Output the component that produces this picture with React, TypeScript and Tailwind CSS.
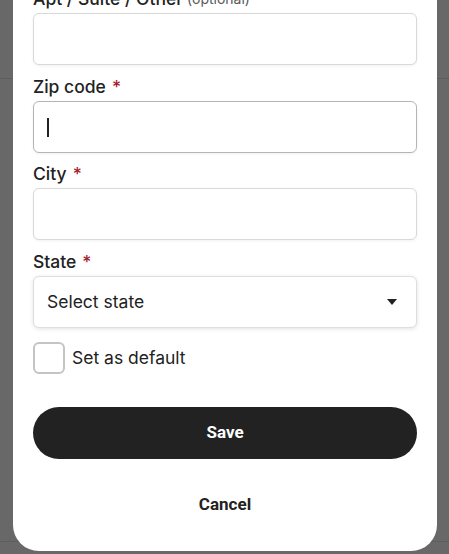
import React from "react";

function Label({ text, optional, required }: { text: string; optional?: boolean; required?: boolean }) {
  return (
    <div className="h-6 mb-[2px] flex items-end text-[17.5px] leading-6 font-medium text-[#222222] whitespace-nowrap">
      <span>{text}</span>
      {optional && <span className="ml-1 text-[14px] font-normal text-[#595959]">(optional)</span>}
      {required && <span className="ml-[6px] text-[#a61a2e]">*</span>}
    </div>
  );
}

function Input({ focused }: { focused?: boolean }) {
  return (
    <div
      className={
        "h-[52px] rounded-md bg-white flex items-center px-[13px] shadow-[0_1px_3px_rgba(0,0,0,0.06)] " +
        (focused ? "border border-[#b5b5b5]" : "border border-[#d9d9d9]")
      }
    >
      {focused && <div className="w-[1.5px] h-[19px] bg-[#222222]" />}
    </div>
  );
}

export default function App() {
  return (
    <div
      className="relative w-[449px] h-[554px] overflow-hidden bg-[#686868]"
      style={{ fontFamily: "Inter, 'Noto Sans', sans-serif" }}
    >
      <div className="absolute left-0 right-0 top-[78px] h-px bg-[#5e5e5e]" />
      <div className="absolute left-0 right-0 top-[541px] h-px bg-[#5e5e5e]" />
      <div className="absolute left-[13px] w-[424px] bottom-[3px] bg-white rounded-b-[26px] px-5 pb-[22px]">
        <div className="flex flex-col">
          <div>
            <Label text="Apt / Suite / Other" optional />
            <Input />
          </div>
          <div className="mt-[10px]">
            <Label text="Zip code" required />
            <Input focused />
          </div>
          <div className="mt-[9px]">
            <Label text="City" required />
            <Input />
          </div>
          <div className="mt-[10px]">
            <Label text="State" required />
            <div className="h-[52px] rounded-md bg-white border border-[#dedede] shadow-[0_1px_4px_rgba(0,0,0,0.12)] flex items-center justify-between pl-[13px] pr-[19px]">
              <span className="text-[17.5px] text-[#222222]">Select state</span>
              <svg width="10" height="6" viewBox="0 0 10 6">
                <path d="M0 0 H10 L5 6 Z" fill="#222222" />
              </svg>
            </div>
          </div>
          <div className="mt-[14px] flex items-center">
            <div className="w-8 h-8 rounded-md border-2 border-[#c4c4c4] bg-white" />
            <span className="ml-[7px] text-[17.5px] text-[#222222]">Set as default</span>
          </div>
          <button
            className="mt-[33px] h-[52px] w-full rounded-full bg-[#222222] text-white text-[17px] font-bold"
            style={{ fontFamily: "Roboto, sans-serif" }}
          >
            Save
          </button>
          <button
            className="mt-[22px] h-12 w-full text-[#222222] text-[17px] font-bold"
            style={{ fontFamily: "Roboto, sans-serif" }}
          >
            Cancel
          </button>
        </div>
      </div>
    </div>
  );
}
